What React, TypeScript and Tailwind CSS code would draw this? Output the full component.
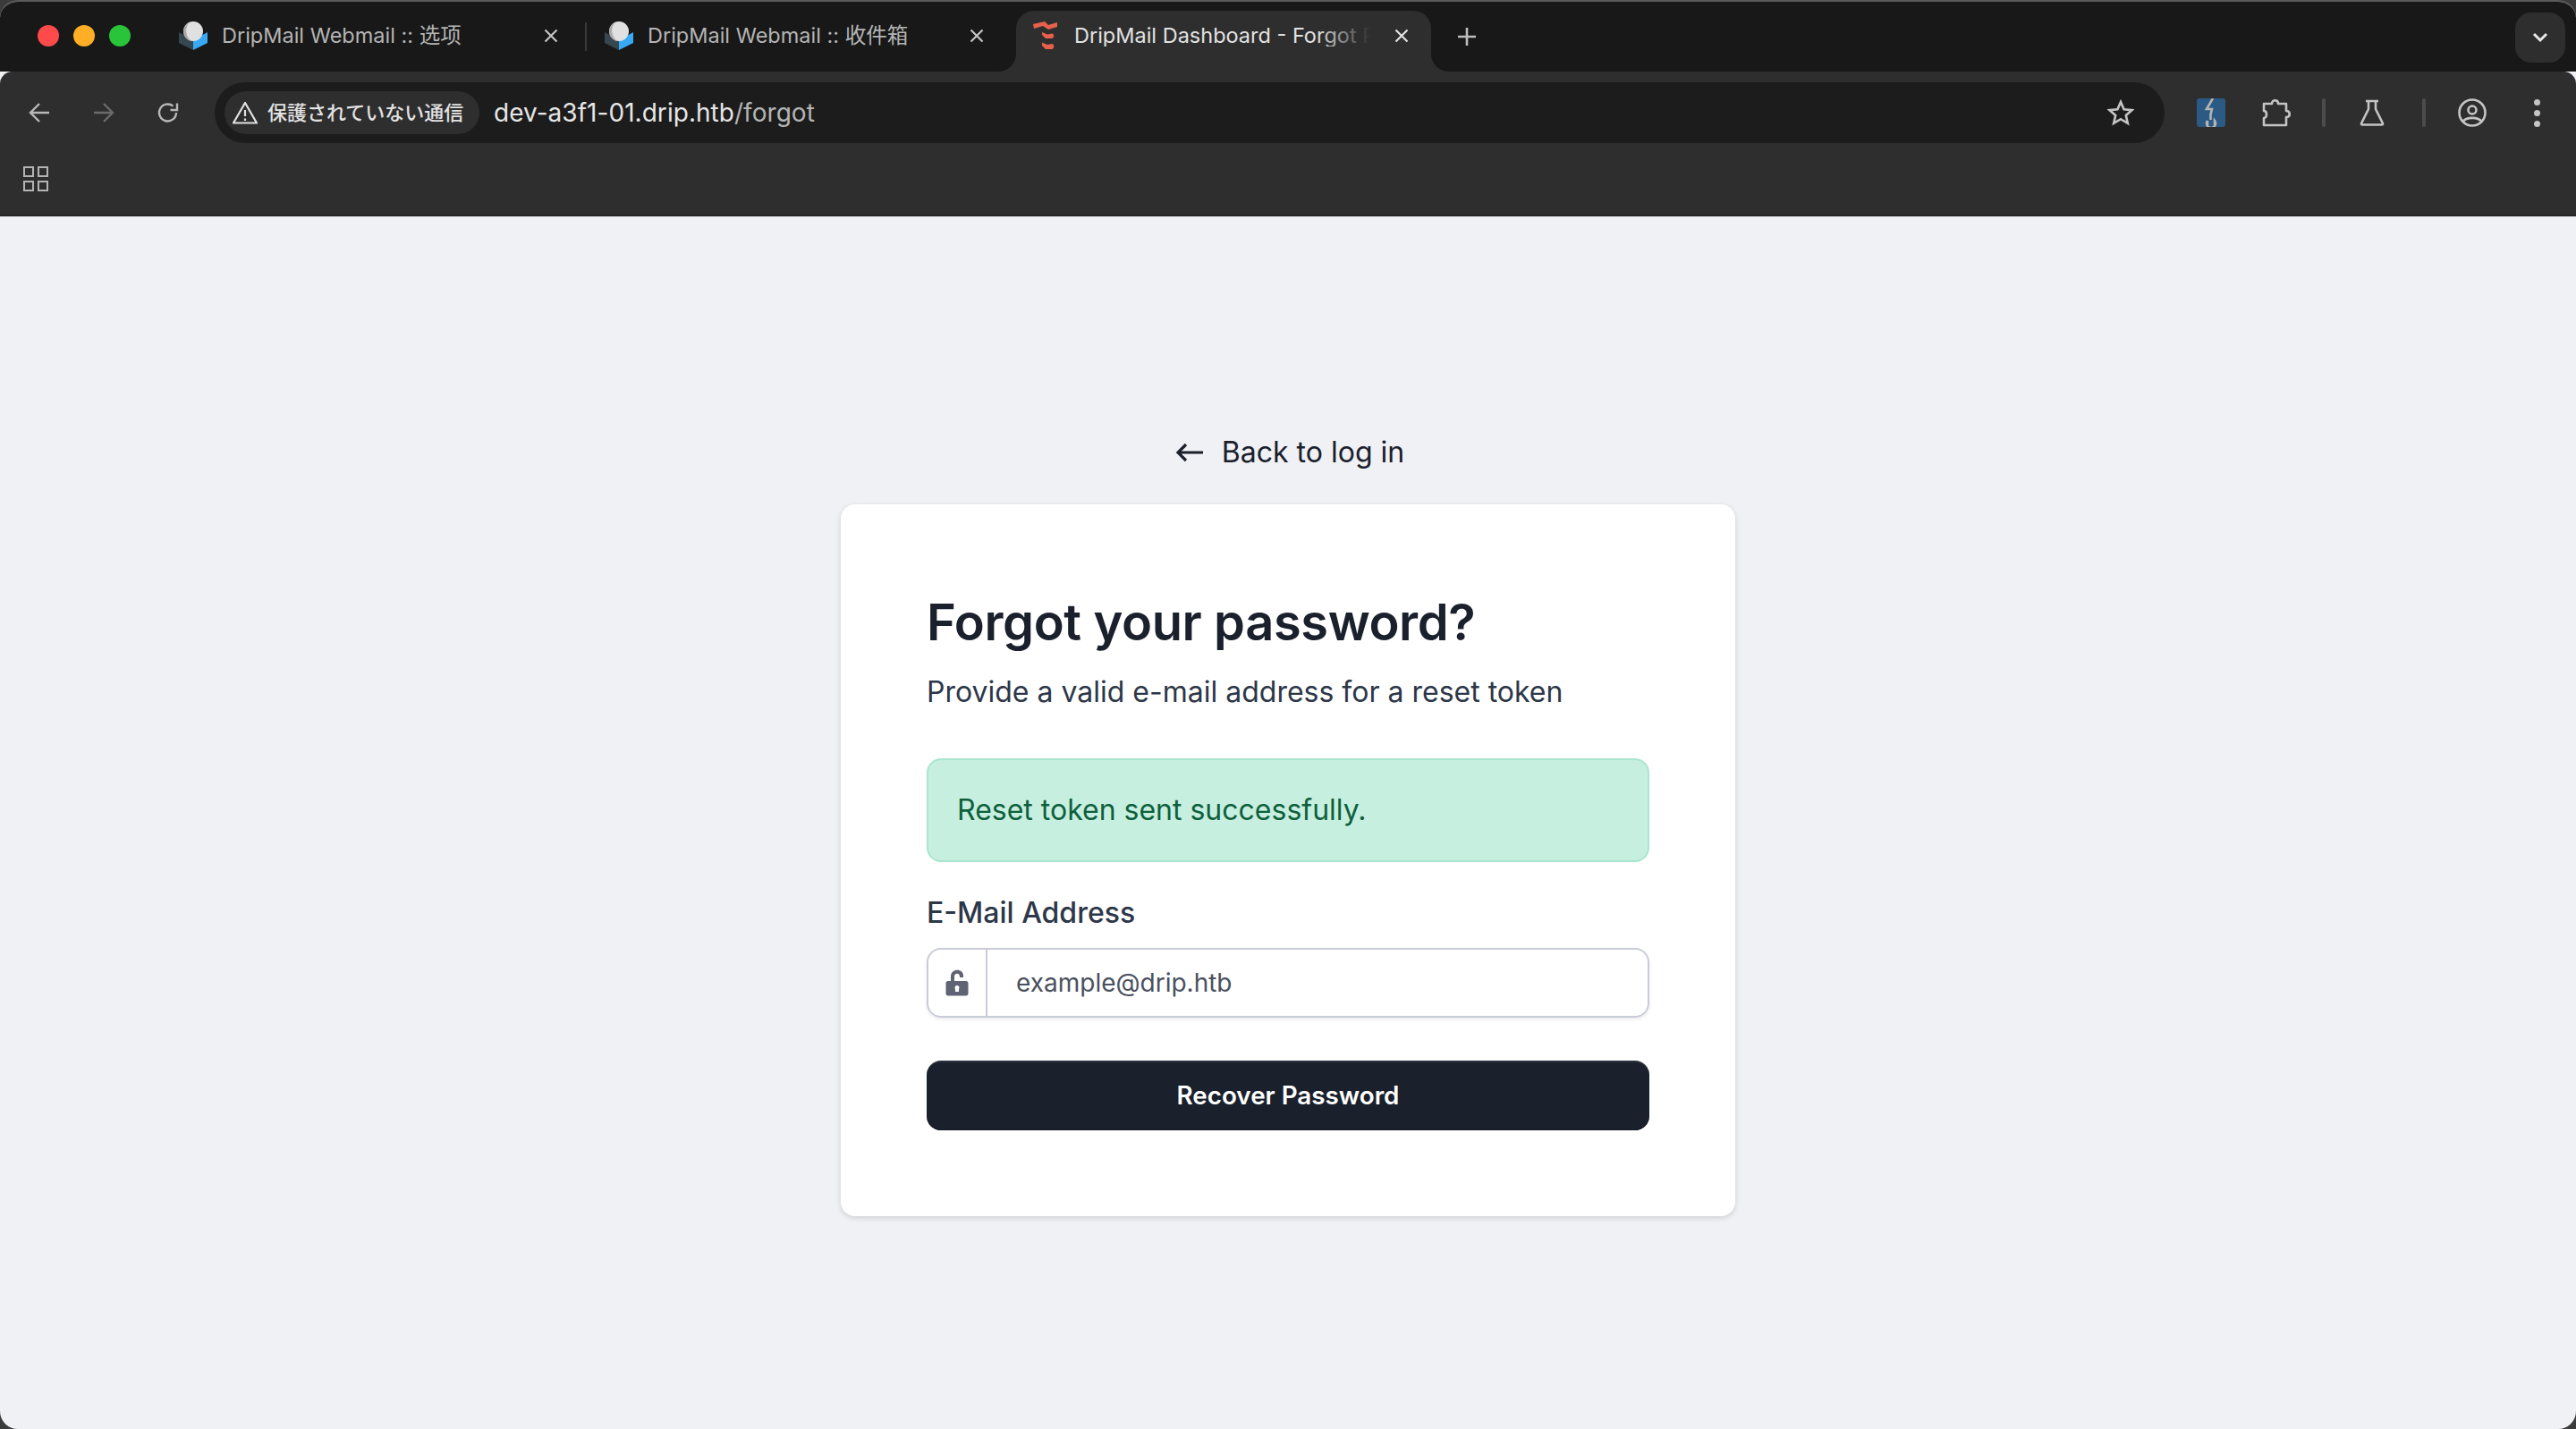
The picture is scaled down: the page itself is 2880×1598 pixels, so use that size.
import React from "react";

const Roundcube = () => (
  <svg viewBox="0 0 32 32" className="w-8 h-8 shrink-0">
    <path d="M0 12 L16 21 L16 32 L0 24 Z" fill="#37474f" />
    <path d="M32 12 L16 21 L16 32 L32 24 Z" fill="#37a9f5" />
    <circle cx="16" cy="11" r="11" fill="#e0e0e0" />
    <path d="M12 0.8 A11 11 0 0 0 14 21.8 A14 14 0 0 1 12 0.8 Z" fill="#a9a9a9" />
  </svg>
);

const Tailadmin = () => (
  <svg viewBox="0 0 28 32" className="w-7 h-8 shrink-0" fill="#e8604c">
    <path d="M0 3 L13 0 L17 4 L27 1 L27 6 L17 9 L11 5 L1 8 Z" />
    <path d="M10 12 L16 14.5 L21 13.5 C24 14 24 18 21 19 L14 19 L10 15 Z" />
    <path d="M10 23.5 L16 26 L21 25 C24 25.5 24 30 21 31 L14 31 L10 27 Z" />
  </svg>
);

const CloseX = ({ className = "" }: { className?: string }) => (
  <svg viewBox="0 0 18 18" className={`w-[18px] h-[18px] shrink-0 ${className}`} fill="none" stroke="currentColor" strokeWidth="2.2">
    <path d="M2.5 2.5 L15.5 15.5 M15.5 2.5 L2.5 15.5" />
  </svg>
);

const Tab = ({ title, width, padding }: { title: string; width: string; padding: string }) => (
  <div className={`flex items-center h-[68px] pb-[12px] ${padding} ${width}`}>
    <Roundcube />
    <span className="ml-[16px] text-[23.5px] leading-none text-[#b4b4b4] flex-1 whitespace-nowrap">{title}</span>
    <CloseX className="text-[#c4c4c4]" />
  </div>
);

export default function App() {
  return (
    <div className="w-[2880px] h-[1598px] bg-[#3b3b3b] overflow-hidden" style={{ fontFamily: "Inter, 'Noto Sans CJK JP', sans-serif" }}>
      <div className="w-full h-full rounded-[20px] overflow-hidden flex flex-col bg-[#f0f1f5] border-t-2 border-t-[#5a5a5a]">
        {/* Tab strip */}
        <div className="h-[78px] bg-[#181818] flex items-end shrink-0 pl-[42px] pr-[12px]">
          <div className="flex items-center gap-[16px] h-[68px] pb-[12px] w-[142px]">
            <span className="w-6 h-6 rounded-full bg-[#fe4a4a]" />
            <span className="w-6 h-6 rounded-full bg-[#ffae25]" />
            <span className="w-6 h-6 rounded-full bg-[#29c43a]" />
          </div>
          <Tab title="DripMail Webmail :: 选项" width="w-[470px]" padding="pl-[16px] pr-[29px]" />
          <div className="w-[2px] h-[32px] bg-[#3a3a3a] mb-[23px]" />
          <Tab title="DripMail Webmail :: 收件箱" width="w-[480px]" padding="pl-[20px] pr-[35px]" />
          <div className="relative w-[464px] h-[68px] bg-[#2e2e2e] rounded-t-[20px] flex items-center pb-[12px] pl-[19px] pr-[24px]">
            <div className="absolute -left-[20px] bottom-0 w-[20px] h-[20px] bg-[#2e2e2e]">
              <div className="w-full h-full bg-[#181818] rounded-br-[20px]" />
            </div>
            <div className="absolute -right-[20px] bottom-0 w-[20px] h-[20px] bg-[#2e2e2e]">
              <div className="w-full h-full bg-[#181818] rounded-bl-[20px]" />
            </div>
            <Tailadmin />
            <span className="relative ml-[18px] flex-1 text-[23.5px] leading-none text-[#e2e2e2] whitespace-nowrap overflow-hidden">
              DripMail Dashboard - Forgot Password
              <span className="absolute right-0 top-0 bottom-0 w-[60px] bg-gradient-to-r from-transparent to-[#2e2e2e]" />
            </span>
            <CloseX className="ml-[26px] text-[#e2e2e2]" />
          </div>
          <svg viewBox="0 0 24 24" className="w-6 h-6 ml-[28px] mb-[27px] text-[#bdbdbd]" fill="none" stroke="currentColor" strokeWidth="2.6">
            <path d="M12 2 V22 M2 12 H22" />
          </svg>
          <div className="ml-auto w-[56px] h-[56px] mb-[10px] rounded-[18px] bg-[#2e2e2e] flex items-center justify-center">
            <svg viewBox="0 0 18 12" className="w-[18px] h-[12px] text-[#e8e8e8]" fill="none" stroke="currentColor" strokeWidth="3">
              <path d="M2 2 L9 9 L16 2" />
            </svg>
          </div>
        </div>

        {/* Toolbar */}
        <div className="h-[92px] bg-[#2e2e2e] flex items-center shrink-0 rounded-t-[14px] pl-[32px] pr-[30px]">
          <svg viewBox="0 0 24 24" className="w-6 h-6 text-[#b8b8b8] shrink-0" fill="none" stroke="currentColor" strokeWidth="2.4">
            <path d="M23 12 H2 M12 2 L2 12 L12 22" />
          </svg>
          <svg viewBox="0 0 24 24" className="w-6 h-6 ml-[48px] text-[#6b6b6b] shrink-0" fill="none" stroke="currentColor" strokeWidth="2.4">
            <path d="M1 12 H22 M12 2 L22 12 L12 22" />
          </svg>
          <svg viewBox="0 0 24 24" className="w-6 h-6 ml-[48px] text-[#b8b8b8] shrink-0" fill="none" stroke="currentColor" strokeWidth="2.4">
            <path d="M21 12 A9.5 9.5 0 1 1 17.5 4.6" />
            <path d="M22 1.5 V9 H14.5" fill="none" strokeWidth="2.4" />
          </svg>
          <div className="ml-[40px] w-[2180px] h-[68px] rounded-full bg-[#1c1c1c] flex items-center pl-[11px] pr-[34px] shrink-0">
            <div className="h-[48px] w-[285px] rounded-full bg-[#2e2e2e] flex items-center pl-[9px] shrink-0">
              <svg viewBox="0 0 28 26" className="w-7 h-[26px] text-[#e2e2e2] shrink-0" fill="none" stroke="currentColor" strokeWidth="2.2" strokeLinejoin="round">
                <path d="M14 2 L27 24.5 H1 Z" />
                <path d="M14 10 V17 M14 19.5 V22" />
              </svg>
              <span className="ml-[11px] text-[22px] leading-none font-medium text-[#e2e2e2] whitespace-nowrap">保護されていない通信</span>
            </div>
            <span className="ml-[16px] text-[28px] tracking-[0.04px] leading-none text-[#e6e6e6] whitespace-nowrap">
              dev-a3f1-01.drip.htb<span className="text-[#b4b4b4]">/forgot</span>
            </span>
            <svg viewBox="0 0 30 30" className="w-[30px] h-[30px] ml-auto text-[#c4c4c4]" fill="none" stroke="currentColor" strokeWidth="2.6" strokeLinejoin="miter">
              <path d="M15 3 L18.6 11.3 L27.6 12.1 L20.8 18 L22.8 26.8 L15 22.2 L7.2 26.8 L9.2 18 L2.4 12.1 L11.4 11.3 Z" />
            </svg>
          </div>
          <div className="ml-[36px] w-8 h-8 rounded-[3px] bg-[#2b5a85] shrink-0 overflow-hidden">
            <svg viewBox="0 0 32 32" className="w-8 h-8 text-[#b4b4b4]" fill="none" stroke="currentColor" strokeWidth="2.6">
              <path d="M18 0 L11 12 H17 L15.5 18 V24" />
              <path d="M12 25 A5 5 0 1 0 20 25 V30 M12 25 V30" />
            </svg>
          </div>
          <svg viewBox="0 0 34 34" className="w-[34px] h-[34px] ml-[40px] text-[#c4c4c4] shrink-0" fill="none" stroke="currentColor" strokeWidth="2.6" strokeLinejoin="round">
            <path d="M3 7 H12 C12 2 19 2 19 7 H28 V15 C33 15 33 22 28 22 V31 H3 V23 C7 23 7 15 3 15 Z" />
          </svg>
          <div className="w-1 h-8 rounded-full bg-[#4c4c4c] ml-[34px] shrink-0" />
          <svg viewBox="0 0 28 30" className="w-7 h-[30px] ml-[38px] text-[#c4c4c4] shrink-0" fill="none" stroke="currentColor" strokeWidth="2.6" strokeLinejoin="round">
            <path d="M7 2 H21 M10 2 V11 L2 27 C2 28 2.5 28.5 3 28.5 H25 C25.5 28.5 26 28 26 27 L18 11 V2" />
          </svg>
          <div className="w-1 h-8 rounded-full bg-[#4c4c4c] ml-[42px] shrink-0" />
          <svg viewBox="0 0 32 32" className="w-8 h-8 ml-[36px] text-[#c4c4c4] shrink-0" fill="none" stroke="currentColor" strokeWidth="2.6">
            <circle cx="16" cy="16" r="14.5" />
            <circle cx="16" cy="13" r="4.5" />
            <path d="M5.5 26 C9 20.5 23 20.5 26.5 26" />
          </svg>
          <div className="ml-[53px] flex flex-col gap-[5px] shrink-0">
            <span className="w-[7px] h-[7px] rounded-full bg-[#c4c4c4]" />
            <span className="w-[7px] h-[7px] rounded-full bg-[#c4c4c4]" />
            <span className="w-[7px] h-[7px] rounded-full bg-[#c4c4c4]" />
          </div>
        </div>

        {/* Bookmarks bar */}
        <div className="h-[70px] bg-[#2e2e2e] shrink-0 pl-[26px] pt-[14px] flex items-start border-b-2 border-b-[#262626]">
          <div className="grid grid-cols-2 gap-[4px] w-[28px]">
            <span className="w-3 h-3 border-2 border-[#b4b4b4]" />
            <span className="w-3 h-3 border-2 border-[#b4b4b4]" />
            <span className="w-3 h-3 border-2 border-[#b4b4b4]" />
            <span className="w-3 h-3 border-2 border-[#b4b4b4]" />
          </div>
        </div>

        {/* Page */}
        <div className="flex-1 flex flex-col items-center pt-[240px]">
          <a className="flex items-center h-[48px] pl-[4px] text-[32px] leading-none text-[#1a202c]">
            <svg viewBox="0 0 32 24" className="w-[32px] h-6 mr-[20px] text-[#1a202c]" fill="none" stroke="currentColor" strokeWidth="3.2">
              <path d="M31 12 H3 M12 3 L3 12 L12 21" />
            </svg>
            Back to log in
          </a>
          <div className="mt-[34px] w-[1000px] h-[796px] bg-white rounded-[16px] shadow-[0_2px_6px_rgba(0,0,0,0.14)] p-[96px] flex flex-col">
            <h1 className="text-[56px] leading-[72px] tracking-[-0.4px] font-semibold text-[#1a202c] whitespace-nowrap">Forgot your password?</h1>
            <p className="mt-[18px] text-[32px] leading-[48px] text-[#2d3748]">Provide a valid e-mail address for a reset token</p>
            <div className="mt-[50px] h-[116px] shrink-0 rounded-[16px] bg-[#c6efe0] border-2 border-[#a9e5cf] flex items-center pl-[32px] text-[32px] leading-none text-[#0f5f3c]">
              Reset token sent successfully.
            </div>
            <label className="mt-[37px] text-[32px] leading-[40px] font-medium text-[#2d3748]">E-Mail Address</label>
            <div className="mt-[19px] h-[78px] shrink-0 rounded-[16px] border-2 border-[#c9ccd6] shadow-[0_2px_4px_rgba(0,0,0,0.08)] flex items-stretch">
              <div className="w-[66px] border-r-2 border-r-[#c9ccd6] flex items-center justify-center shrink-0">
                <svg viewBox="0 0 26 30" className="w-[26px] h-[30px] text-[#5f6373]" fill="currentColor">
                  <path fillRule="evenodd" d="M3 13 H6 V8 C6 -1.5 20 -1.5 20 7 V9 H16 V8 C16 3.5 10 3.5 10 8 V13 H23 C24.5 13 25.5 14 25.5 15.5 V27 C25.5 28.5 24.5 29.5 23 29.5 H3 C1.5 29.5 0.5 28.5 0.5 27 V15.5 C0.5 14 1.5 13 3 13 Z M13 18 A2.5 2.5 0 0 0 11 22 V25 H15 V22 A2.5 2.5 0 0 0 13 18 Z" />
                </svg>
              </div>
              <span className="pl-[32px] self-center text-[28px] leading-none text-[#4a5060]">example@drip.htb</span>
            </div>
            <button className="mt-[48px] h-[78px] w-full shrink-0 rounded-[16px] bg-[#1a202c] border-t-2 border-t-[#2b3240] shadow-[inset_0_-1px_0_#141924] text-[27.8px] leading-none font-semibold text-white">
              Recover Password
            </button>
          </div>
        </div>
      </div>
    </div>
  );
}
